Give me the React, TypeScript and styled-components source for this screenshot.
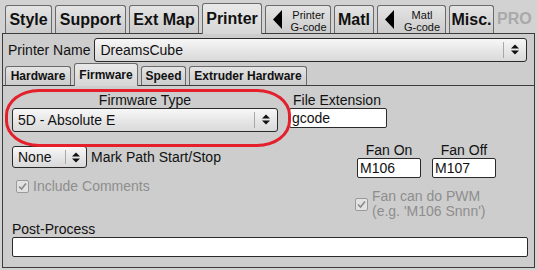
import React from "react";
import styled, { createGlobalStyle } from "styled-components";

const Global = createGlobalStyle`
  html, body { margin: 0; padding: 0; background: #d2d2d2; }
  body { font-family: "Liberation Sans", Arial, sans-serif; }
`

const Window = styled.div`
  width: 537px;
  height: 270px;
  background: #d2d2d2;
  color: #111;
  font-size: 14px;
  overflow: hidden;
`

const TabBar = styled.div`
  display: flex;
  align-items: flex-end;
  gap: 3px;
  height: 33px;
  padding-left: 5px;
`

const Tab = styled.div<{ $active?: boolean; $w: number }>`
  box-sizing: border-box;
  width: ${p => p.$w}px;
  height: ${p => (p.$active ? 31 : 28)}px;
  margin-bottom: ${p => (p.$active ? -1 : 0)}px;
  border: 1px solid #6a6a6a;
  border-bottom: none;
  border-radius: 3px 3px 0 0;
  background: ${p => (p.$active ? "linear-gradient(#e9e9e9, #d6d6d6)" : "linear-gradient(#e4e4e4, #cbcbcb)")};
  display: flex;
  align-items: center;
  justify-content: center;
  font-weight: bold;
  font-size: 16px;
  position: relative;
  z-index: ${p => (p.$active ? 2 : 1)};
`

const ArrowTab = styled(Tab)`
  font-weight: normal;
  font-size: 11px;
  justify-content: flex-start;
  padding-left: 7px;
  gap: 5px;
`

const TwoLine = styled.div`
  flex: 1;
  text-align: center;
  line-height: 12px;
  padding-top: 2px;
`

const ProLabel = styled.div`
  height: 28px;
  display: flex;
  align-items: center;
  font-weight: bold;
  font-size: 16px;
  color: #a9a9a9;
`

const Panel = styled.div`
  box-sizing: border-box;
  margin: 0 2px;
  height: 235px;
  border: 1px solid #3c3c3c;
  background: #cdcdcd;
  display: flex;
  flex-direction: column;
  position: relative;
  z-index: 1;
`

const NameRow = styled.div`
  display: flex;
  align-items: center;
  gap: 4px;
  padding: 4px 7px 0 5px;
`

const SelectBox = styled.div<{ $w?: number; $h?: number }>`
  box-sizing: border-box;
  ${p => (p.$w ? `width: ${p.$w}px;` : "flex: 1;")}
  height: ${p => p.$h ?? 24}px;
  border: 1px solid #2a2a2a;
  border-radius: 3px;
  background: linear-gradient(#f7f7f7, #e6e6e6 55%, #d9d9d9);
  display: flex;
  align-items: center;
  font-size: 14px;
`

const SelectText = styled.span`
  flex: 1;
  padding-left: 5px;
  white-space: nowrap;
`

const SelectArrows = styled.span<{ $w?: number }>`
  width: ${p => p.$w ?? 22}px;
  height: 70%;
  border-left: 1px solid #a8a8a8;
  display: flex;
  align-items: center;
  justify-content: center;
`

const SubTabBar = styled.div`
  display: flex;
  align-items: flex-end;
  gap: 3px;
  height: 23px;
  padding-left: 2px;
`

const SubTab = styled(Tab)`
  font-size: 12px;
  height: ${p => (p.$active ? 23 : 19)}px;
`

const Inner = styled.div`
  flex: 1;
  border-top: 1px solid #3c3c3c;
  position: relative;
  padding: 7px 7px 0 9px;
  display: flex;
  flex-direction: column;
`

const Row = styled.div<{ $gap?: number; $top?: number }>`
  display: flex;
  align-items: flex-start;
  gap: ${p => p.$gap ?? 0}px;
  margin-top: ${p => p.$top ?? 0}px;
`

const Field = styled.div<{ $w: number; $center?: boolean }>`
  width: ${p => p.$w}px;
  display: flex;
  flex-direction: column;
  align-items: ${p => (p.$center ? "center" : "flex-start")};
`

const Label = styled.div<{ $dim?: boolean; $indent?: number }>`
  font-size: 14px;
  line-height: 15px;
  padding-left: ${p => p.$indent ?? 0}px;
  color: ${p => (p.$dim ? "#8e8e8e" : "#111")};
  white-space: nowrap;
`

const TextInput = styled.div<{ $w?: number }>`
  box-sizing: border-box;
  ${p => (p.$w ? `width: ${p.$w}px;` : "width: 100%;")}
  height: 20px;
  border: 1px solid #2a2a2a;
  border-radius: 2px;
  background: #fff;
  font-size: 14px;
  line-height: 18px;
  padding-left: 2px;
`

const Highlight = styled.div`
  position: absolute;
  left: 2px;
  top: 3px;
  width: 286px;
  height: 58px;
  border: 3.5px solid #e3202c;
  border-radius: 34px / 26px;
  box-sizing: border-box;
  pointer-events: none;
`

const Check = styled.span`
  box-sizing: border-box;
  width: 13px;
  height: 13px;
  border: 1px solid #9a9a9a;
  border-radius: 2px;
  background: #e2e2e2;
  display: inline-flex;
  align-items: center;
  justify-content: center;
  flex-shrink: 0;
`

const CheckRow = styled.div<{ $top?: number; $indent?: number }>`
  display: flex;
  align-items: center;
  gap: 4px;
  margin-top: ${p => p.$top ?? 0}px;
  padding-left: ${p => p.$indent ?? 0}px;
`

const Arrows = () => (
  <svg width="8" height="11" viewBox="0 0 8 11">
    <path d="M0 4.5 L4 0.5 L8 4.5 Z M0 6.5 L4 10.5 L8 6.5 Z" fill="#111" />
  </svg>
)

const LeftTri = () => (
  <svg width="9" height="19" viewBox="0 0 9 19">
    <path d="M9 0 L0 9.5 L9 19 Z" fill="#000" />
  </svg>
)

const Tick = () => (
  <svg width="11" height="11" viewBox="0 0 11 11">
    <path d="M2 5.5 L4.5 8 L9 2.5" fill="none" stroke="#8a8a8a" strokeWidth="1.6" />
  </svg>
)

const App: React.FC = () => {
  return <Window>
    <Global />
    <TabBar>
      <Tab $w={47}>Style</Tab>
      <Tab $w={71}>Support</Tab>
      <Tab $w={70}>Ext Map</Tab>
      <Tab $w={60} $active>Printer</Tab>
      <ArrowTab $w={66}><LeftTri /><TwoLine>Printer<br />G-code</TwoLine></ArrowTab>
      <Tab $w={40}>Matl</Tab>
      <ArrowTab $w={69}><LeftTri /><TwoLine>Matl<br />G-code</TwoLine></ArrowTab>
      <Tab $w={45}>Misc.</Tab>
      <ProLabel>PRO</ProLabel>
    </TabBar>
    <Panel>
      <NameRow>
        <Label>Printer Name</Label>
        <SelectBox>
          <SelectText>DreamsCube</SelectText>
          <SelectArrows><Arrows /></SelectArrows>
        </SelectBox>
      </NameRow>
      <SubTabBar>
        <SubTab $w={66}>Hardware</SubTab>
        <SubTab $w={64} $active>Firmware</SubTab>
        <SubTab $w={45}>Speed</SubTab>
        <SubTab $w={118}>Extruder Hardware</SubTab>
      </SubTabBar>
      <Inner>
        <Highlight />
        <Row $gap={11}>
          <Field $w={266} $center>
            <Label>Firmware Type</Label>
            <SelectBox $w={266} $h={24}>
              <SelectText>5D - Absolute E</SelectText>
              <SelectArrows><Arrows /></SelectArrows>
            </SelectBox>
          </Field>
          <Field $w={100}>
            <Label $indent={4}>File Extension</Label>
            <TextInput $w={98}>gcode</TextInput>
          </Field>
        </Row>
        <Row $top={11}>
          <Field $w={343}>
            <CheckRow $top={3}>
              <SelectBox $w={75} $h={22}>
                <SelectText>None</SelectText>
                <SelectArrows $w={20}><Arrows /></SelectArrows>
              </SelectBox>
              <Label>Mark Path Start/Stop</Label>
            </CheckRow>
            <CheckRow $top={11} $indent={4}>
              <Check><Tick /></Check>
              <Label $dim>Include Comments</Label>
            </CheckRow>
          </Field>
          <Field $w={160}>
            <Row $gap={11} style={{ paddingLeft: 2 }}>
              <Field $w={64} $center>
                <Label>Fan On</Label>
                <TextInput $w={64}>M106</TextInput>
              </Field>
              <Field $w={64} $center>
                <Label>Fan Off</Label>
                <TextInput $w={64}>M107</TextInput>
              </Field>
            </Row>
            <CheckRow $top={11}>
              <Check><Tick /></Check>
              <Label $dim>Fan can do PWM<br />(e.g. 'M106 Snnn')</Label>
            </CheckRow>
          </Field>
        </Row>
        <Field $w={516} style={{ marginTop: 3 }}>
          <Label>Post-Process</Label>
          <TextInput />
        </Field>
      </Inner>
    </Panel>
  </Window>
}

export default App;
